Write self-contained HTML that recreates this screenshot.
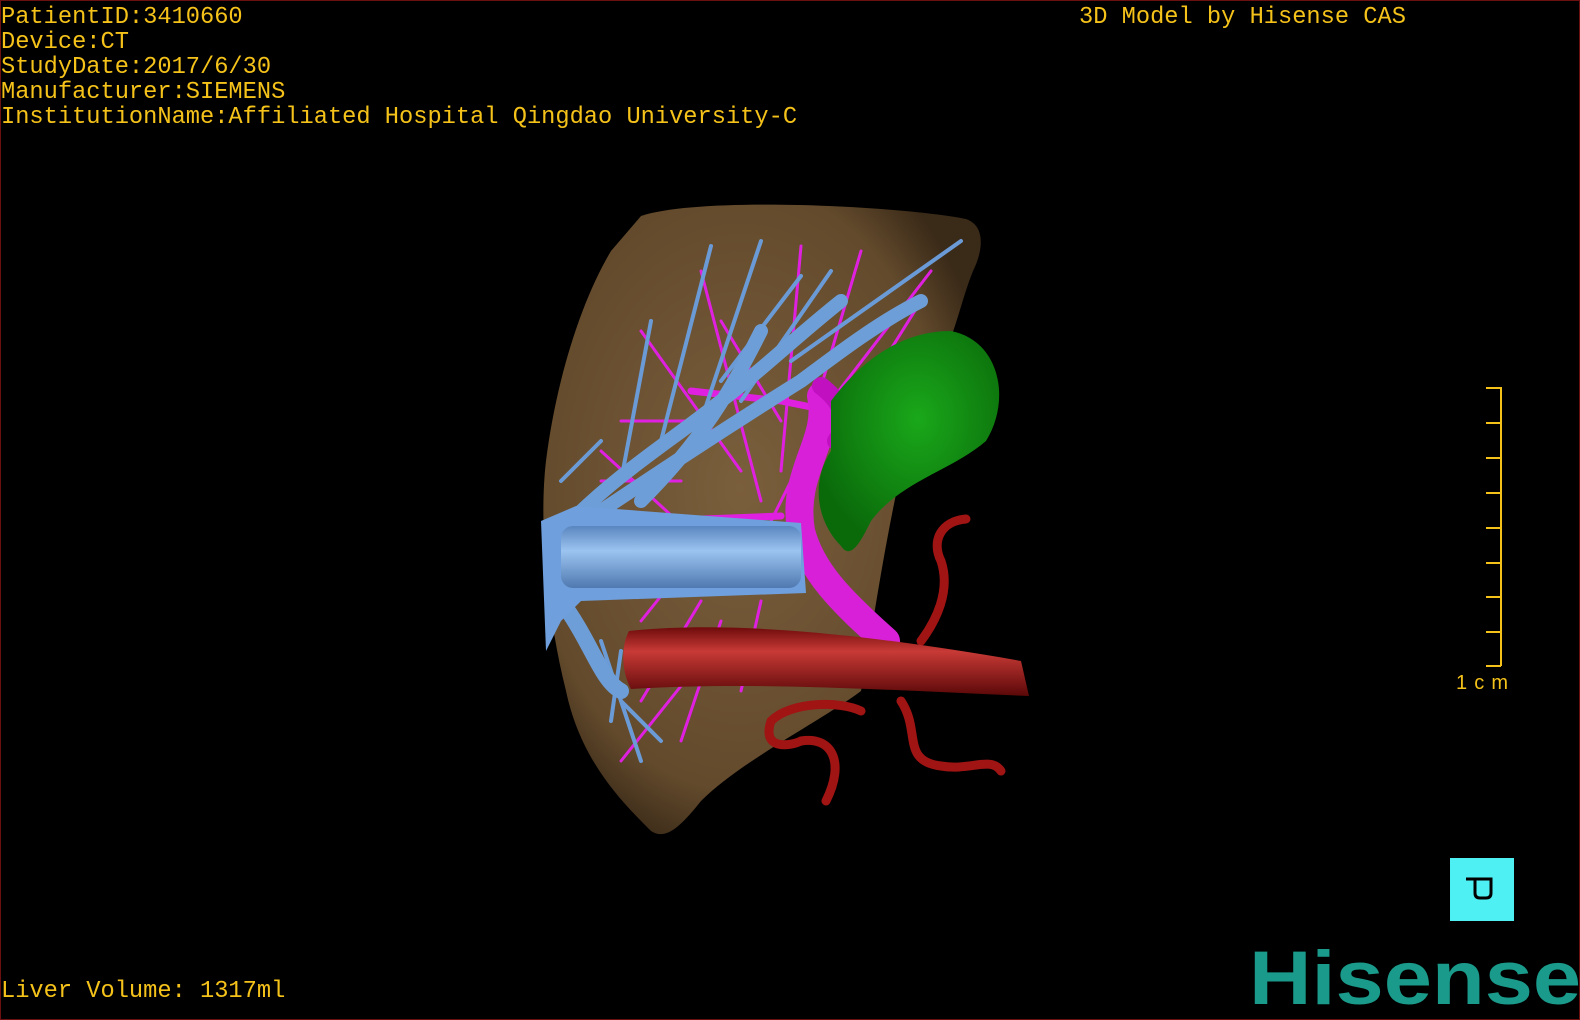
<!DOCTYPE html>
<html><head><meta charset="utf-8"><style>
html,body{margin:0;padding:0;background:#000;}
#s{position:relative;width:1580px;height:1020px;background:#000;overflow:hidden;box-sizing:border-box;border:1px solid #6a1010;}
.t{position:absolute;color:#f5c21a;font-family:"Liberation Mono",monospace;font-size:23.7px;line-height:25px;white-space:pre;}
</style></head><body><div id="s">
<div class="t" style="left:0;top:4px">PatientID:3410660
Device:CT
StudyDate:2017/6/30
Manufacturer:SIEMENS
InstitutionName:Affiliated Hospital Qingdao University-C</div>
<div class="t" style="left:1078px;top:4px">3D Model by Hisense CAS</div>
<div class="t" style="left:0;top:978px">Liver Volume: 1317ml</div>
<svg width="1580" height="1020" style="position:absolute;left:0;top:0">
<defs>
<radialGradient id="lv" cx="0.45" cy="0.45" r="0.6"><stop offset="0" stop-color="#7a5f3c"/><stop offset="0.8" stop-color="#634a2c"/><stop offset="1" stop-color="#3a2a18"/></radialGradient>
<linearGradient id="ivc" x1="0" y1="0" x2="0" y2="1"><stop offset="0" stop-color="#5a86c0"/><stop offset="0.4" stop-color="#9cc4f0"/><stop offset="1" stop-color="#4f79b0"/></linearGradient>
<linearGradient id="ao" x1="0" y1="0" x2="0" y2="1"><stop offset="0" stop-color="#6e0c0c"/><stop offset="0.35" stop-color="#c83a36"/><stop offset="1" stop-color="#5a0808"/></linearGradient>
<radialGradient id="gb" cx="0.55" cy="0.4" r="0.6"><stop offset="0" stop-color="#1aa81a"/><stop offset="1" stop-color="#0a6a0a"/></radialGradient>
</defs>
<path d="M640,215 C700,195 900,205 965,218 C985,225 982,250 972,270 C960,300 955,330 940,360 L900,470 C880,560 870,640 860,690 C820,720 740,760 700,800 C680,825 665,840 650,830 C620,800 580,760 565,690 C545,610 538,520 545,460 C555,380 580,300 610,250 Z" fill="url(#lv)"/>
<g fill="none" stroke-linecap="round">
<g stroke="#e020e0" stroke-width="3">
<path d="M760,500 L700,270 M740,470 L640,330 M780,470 L800,245 M810,420 L860,250 M830,400 L930,270 M700,420 L620,420 M720,560 L600,450 M700,600 L640,700 M760,600 L740,690 M650,560 L610,520 M720,620 L680,740 M780,420 L720,320 M870,380 L920,300 M680,480 L600,480 M720,520 L640,620 M760,540 L790,480 M700,660 L620,760"/>
</g>
<g stroke="#e020e0" stroke-width="7">
<path d="M690,390 L780,400 L830,410 M650,520 L780,515"/>
</g>
<path d="M820,395 C830,440 790,470 800,530 C810,570 840,600 885,640" stroke="#d820d8" stroke-width="28"/>
<path d="M820,385 C840,400 850,420 835,440" stroke="#c010c0" stroke-width="18"/>
<g stroke="#6b9bd6" stroke-width="4">
<path d="M620,480 L650,320 M660,440 L710,245 M700,420 L760,240 M740,400 L830,270 M790,360 L960,240 M720,380 L800,275 M620,650 L610,720 M600,640 L640,760 M620,700 L660,740 M560,480 L600,440"/>
</g>
<g stroke="#6e9ed8" stroke-width="14">
<path d="M570,520 C620,470 670,440 720,400 C760,370 790,340 840,300 M600,510 C660,470 720,430 800,380 C840,350 880,320 920,300 M640,500 C700,440 730,390 760,330"/>
</g>
<path d="M560,600 C590,640 600,680 620,690" stroke="#6e9ed8" stroke-width="16"/>
</g>
<path d="M540,520 L575,505 L800,522 L805,592 L580,600 L560,620 L545,650 Z" fill="#6f9fdc"/>
<rect x="560" y="525" width="240" height="62" rx="12" fill="url(#ivc)"/>
<path d="M830,400 C860,360 900,330 950,330 C1000,340 1010,400 985,440 C950,470 900,480 870,520 C860,540 850,560 840,545 C815,520 810,480 830,450 Z" fill="url(#gb)"/>
<g fill="none" stroke="#a01414" stroke-linecap="round" stroke-width="9">
<path d="M965,518 C940,520 930,540 940,560 C950,590 935,620 920,640"/>
<path d="M900,700 C920,730 900,760 940,765 C970,770 990,755 1000,770"/>
<path d="M860,710 C840,700 790,700 770,720 C760,750 790,745 800,740 C830,735 845,760 825,800"/>
</g>
<path d="M628,630 C720,620 850,630 1020,660 L1028,695 C900,690 760,680 630,688 C620,670 620,645 628,630 Z" fill="url(#ao)"/>
<g stroke="#f5c21a" stroke-width="2" fill="none">
<path d="M1500,386 L1500,665"/>
<path d="M1485,387 H1500 M1485,422 H1500 M1485,457 H1500 M1485,492 H1500 M1485,527 H1500 M1485,562 H1500 M1485,596 H1500 M1485,631 H1500 M1485,665 H1500"/>
</g>
<text x="1455" y="688" fill="#f5c21a" font-family="Liberation Sans,sans-serif" font-size="20" textLength="52" lengthAdjust="spacing">1cm</text>
<rect x="1449" y="857" width="64" height="63" fill="#4ff0f4"/>
<path d="M1465,878 H1490 V892 Q1490,897 1485,897 H1479 Q1474,897 1474,892 V878" fill="none" stroke="#000" stroke-width="3"/>
<text x="1248" y="1003" fill="#1a9a8a" font-family="Liberation Sans,sans-serif" font-weight="bold" font-size="76" textLength="332" lengthAdjust="spacingAndGlyphs">Hisense</text>
</svg>
</div></body></html>
